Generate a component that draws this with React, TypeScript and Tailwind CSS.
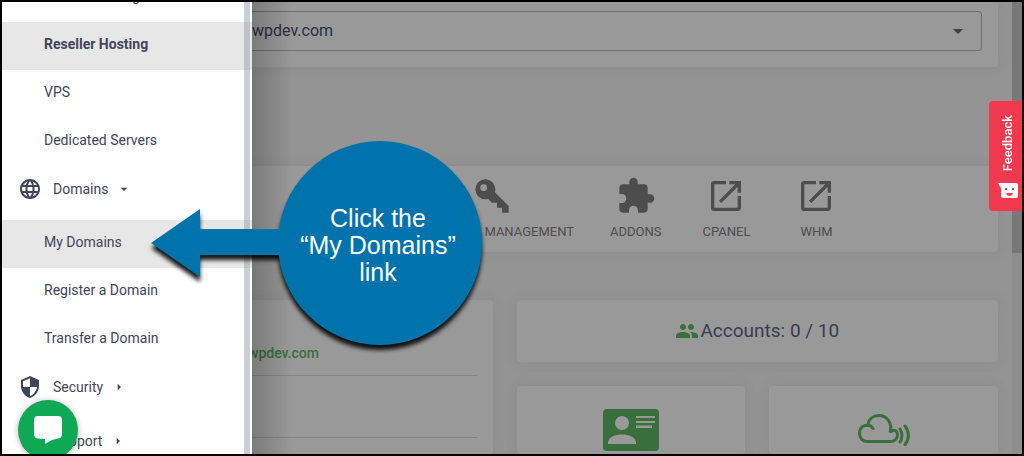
import type { ReactNode } from 'react'
import clsx from 'clsx'
import { MdArrowDropDown, MdArrowRight, MdExtension, MdLanguage, MdOpenInNew, MdPeople, MdSecurity } from 'react-icons/md'

interface NavLinkProps {
  label: string
  highlighted?: boolean
  bold?: boolean
}

function NavLink({ label, highlighted, bold }: NavLinkProps) {
  return (
    <a
      href="#"
      className={clsx(
        'flex h-12 shrink-0 items-center pb-1 pl-[42px] text-sm',
        highlighted && 'bg-[#e7e7e7]',
        bold && 'font-bold'
      )}
    >
      {label}
    </a>
  )
}

interface NavGroupProps {
  label: string
  icon: ReactNode
  open?: boolean
}

function NavGroup({ label, icon, open }: NavGroupProps) {
  return (
    <button type="button" className="flex h-[54px] w-full shrink-0 items-center pb-2 pl-4 text-left text-sm">
      <span className="w-[35px] text-2xl">{icon}</span>
      {label}
      {open ? <MdArrowDropDown className="ml-2 size-4" /> : <MdArrowRight className="ml-2 size-4" />}
    </button>
  )
}

function Sidebar() {
  return (
    <aside className="flex w-[250px] shrink-0 flex-col overflow-hidden bg-white text-[#41455a]">
      <nav className="relative flex flex-col">
        <div className="-mt-7 flex flex-col">
          <NavLink label="Shared Hosting" />
          <NavLink label="Reseller Hosting" highlighted bold />
          <NavLink label="VPS" />
          <NavLink label="Dedicated Servers" />
          <NavGroup label="Domains" icon={<MdLanguage />} open />
          <NavLink label="My Domains" highlighted />
          <NavLink label="Register a Domain" />
          <NavLink label="Transfer a Domain" />
          <NavGroup label="Security" icon={<MdSecurity />} />
          <NavGroup label="Support" icon={<MdSecurity />} />
        </div>
        <div className="absolute top-0 right-[2px] h-full w-[6px] bg-[#9a9ea3]/50" />
      </nav>
    </aside>
  )
}

function Card({ className, children }: { className?: string; children?: ReactNode }) {
  return <div className={clsx('rounded bg-[#999] shadow-[0_0_12px_4px_rgba(0,0,0,0.04)]', className)}>{children}</div>
}

function ToolButton({ label, icon }: { label: string; icon: ReactNode }) {
  return (
    <button type="button" className="flex min-w-[90px] flex-col items-center gap-2 px-5 text-[#4d4d4d]">
      <span className="text-[40px]">{icon}</span>
      <span className="text-[13px] leading-4">{label}</span>
    </button>
  )
}

function KeyIcon() {
  return (
    <svg viewBox="0 0 24 24" className="size-10" fill="currentColor">
      <path d="M22 18V22H18V19H15V16H12L9.740 13.740C9.190 13.910 8.610 14 8 14A6 6 0 0 1 2 8A6 6 0 0 1 8 2A6 6 0 0 1 14 8C14 8.610 13.910 9.190 13.740 9.740L22 18M7 5A2 2 0 0 0 5 7A2 2 0 0 0 7 9A2 2 0 0 0 9 7A2 2 0 0 0 7 5Z" />
    </svg>
  )
}

function CloudIcon() {
  return (
    <svg viewBox="0 0 52 32" className="h-8 w-[52px]" fill="none" stroke="#386f3c" strokeWidth="3" strokeLinecap="round">
      <path d="M15 14.500C12 9.500 1.500 10 1.500 19.500C1.500 24.500 5 27.500 9 27.500H32C37 27.500 39.500 24.500 39.500 21C39.500 16.500 35.500 14.500 32 18.500C35 8 28 1.500 21 1.500C15 1.500 11 5 10 10" />
      <path d="M42 15C44.500 18.500 44.500 24.500 42 28M47 12C51.500 17.500 51.500 25 47 30.500" />
    </svg>
  )
}

function IdCardIcon() {
  return (
    <svg viewBox="0 0 56 42" className="h-[42px] w-14">
      <rect width="56" height="42" rx="4" fill="#386f3c" />
      <g fill="#999">
        <circle cx="19" cy="14" r="7" />
        <path d="M5 35V33C6 28 12 25.500 19 25.500S32 28 33 33V35Z" />
        <path d="M33 7H52V9H33ZM33 12H52V14H33ZM33 16.500H49V19H33Z" />
      </g>
    </svg>
  )
}

function Dashboard() {
  return (
    <main className="flex min-w-0 flex-1 flex-col overflow-hidden bg-[#949494] pr-[14px]">
      <Card className="h-[65px] shrink-0 rounded-l-none pt-[9px] pr-4">
        <div className="relative">
          <select
            aria-label="Primary domain"
            className="h-10 w-full appearance-none rounded-r border border-l-0 border-[#6f6f72] text-base text-[#2b2e3d]"
          >
            <option>wpdev.com</option>
          </select>
          <MdArrowDropDown className="pointer-events-none absolute top-2 right-3 size-6 text-[#393d52]" />
        </div>
      </Card>

      <Card className="mt-[99px] flex h-[86px] shrink-0 items-start rounded-l-none pt-[10px] pl-[158px]">
        <button type="button" className="mr-4 flex w-[164px] flex-col items-center gap-2 text-[#4d4d4d]">
          <KeyIcon />
          <span className="self-end text-[13px] leading-4">MANAGEMENT</span>
        </button>
        <ToolButton label="ADDONS" icon={<MdExtension />} />
        <ToolButton label="CPANEL" icon={<MdOpenInNew />} />
        <ToolButton label="WHM" icon={<MdOpenInNew />} />
      </Card>

      <div className="mt-12 grid min-h-0 flex-1 grid-cols-[minmax(0,1fr)_minmax(0,2fr)] gap-6">
        <Card className="rounded-l-none pr-4">
          <div className="flex h-[76px] items-end border-b border-[#858585] pb-3 text-sm font-medium text-[#386f3c]">
            <span className="-ml-1">wpdev.com</span>
          </div>
          <div className="h-[62px] border-b border-[#858585]" />
        </Card>
        <div className="flex flex-col gap-6">
          <Card className="flex h-[62px] shrink-0 items-center justify-center text-[19px] text-[#393d52]">
            <MdPeople className="mr-px size-6 text-[#386f3c]" />
            Accounts: 0 / 10
          </Card>
          <div className="flex min-h-0 flex-1 gap-6">
            <Card className="flex flex-1 justify-center pt-[23px]">
              <IdCardIcon />
            </Card>
            <Card className="flex flex-1 justify-center pt-7">
              <CloudIcon />
            </Card>
          </div>
        </div>
      </div>
    </main>
  )
}

function Callout() {
  return (
    <div className="absolute top-[139px] left-[149px] h-[204px] w-[331px]">
      <svg viewBox="0 0 331 204" className="absolute inset-0 size-full overflow-visible drop-shadow-[0_5px_2px_rgba(0,0,0,0.9)]" fill="#0073ac">
        <path d="M0 102L49 68V88H140V114H49V136Z" />
        <circle cx="229" cy="102" r="102" />
      </svg>
      <p className="relative mr-1 ml-[127px] flex h-full flex-col items-center justify-center pt-1 font-['Liberation_Sans',sans-serif] text-[25px] leading-[27px] text-white">
        <span>Click the</span>
        <span>“My Domains”</span>
        <span>link</span>
      </p>
    </div>
  )
}

function FeedbackTab() {
  return (
    <button
      type="button"
      className="absolute top-[99px] right-0 flex h-[110px] w-[33px] flex-col items-center justify-end gap-3 rounded-l-sm bg-[#f0384f] pb-3 pl-1 text-white"
    >
      <span className="rotate-180 text-[13px] leading-4 font-medium [writing-mode:vertical-rl]">Feedback</span>
      <svg viewBox="0 0 20 16" className="h-4 w-5">
        <path d="M0 0H18Q20 0 20 2V13Q20 15 18 15H5Q3 15 3 13V5Z" fill="#fff" />
        <path d="M8 10H15Q14 13 11.500 13T8 10ZM7 5H9V7H7ZM14 5H16V7H14Z" fill="#f0384f" />
      </svg>
    </button>
  )
}

export default function App() {
  return (
    <div className="relative flex h-screen overflow-hidden border-2 border-black bg-[#949494] font-[Roboto,sans-serif]">
      <Sidebar />
      <div className="relative flex min-w-0 flex-1">
        <Dashboard />
        <div className="w-[10px] bg-[#8e8e8e]">
          <div className="h-[251px] bg-[#787878]" />
        </div>
        <div className="pointer-events-none absolute inset-y-0 left-0 w-10 bg-linear-to-r from-black/20 to-transparent" />
      </div>
      <Callout />
      <FeedbackTab />
      <button
        type="button"
        aria-label="Chat"
        className="absolute top-[398px] left-4 flex size-[60px] items-center justify-center rounded-full bg-[#0fa956] shadow-[0_1px_6px_rgba(0,0,0,0.3)]"
      >
        <svg viewBox="0 0 28 28" className="size-7" fill="#fff">
          <path d="M4 0H24Q28 0 28 4V18Q28 22 24 22.500L18 24L11 28V23L4 22.500Q0 22 0 18V4Q0 0 4 0Z" />
        </svg>
      </button>
    </div>
  )
}
